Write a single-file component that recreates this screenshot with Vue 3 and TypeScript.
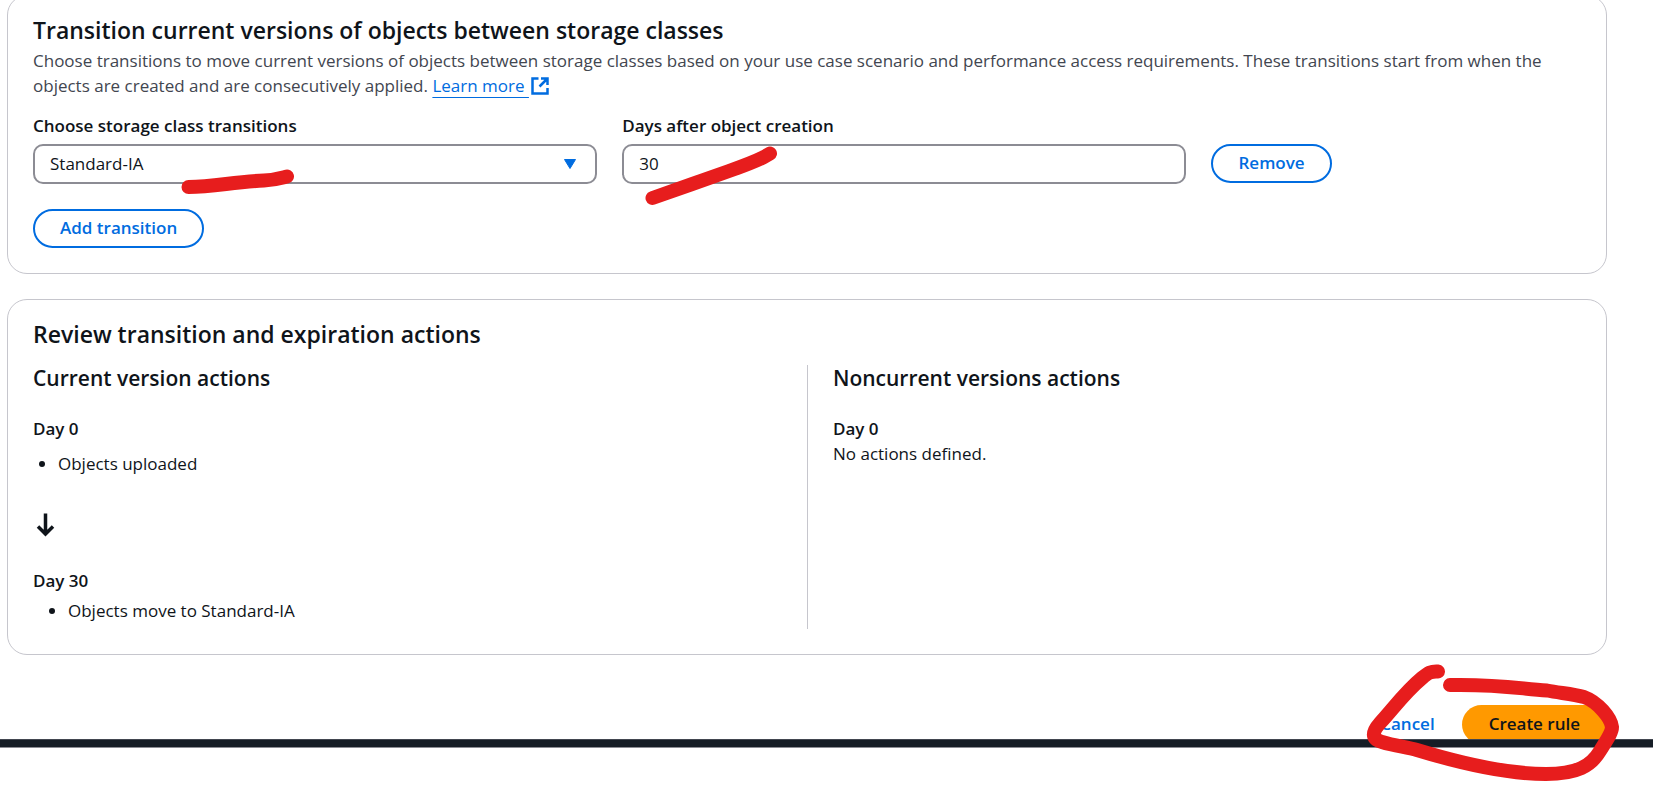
<script setup lang="ts">
import { ref } from 'vue'

interface DayActions {
  day: number
  items: string[]
}

const storageClass = ref('Standard-IA')
const days = ref('30')
const storageClasses: string[] = ['Standard-IA', 'Intelligent-Tiering', 'One Zone-IA']
const currentActions: DayActions[] = [
  { day: 0, items: ['Objects uploaded'] },
  { day: 30, items: ['Objects move to Standard-IA'] },
]
</script>

<template>
  <div class="page">
    <main class="content">
      <section class="card transitions">
        <h2>Transition current versions of objects between storage classes</h2>
        <p class="description">
          Choose transitions to move current versions of objects between storage classes based on your use case scenario
          and performance access requirements. These transitions start from when the objects are created and are
          consecutively applied.
          <a href="#" class="link">Learn more&nbsp;<svg class="external" viewBox="0 0 18 18" aria-hidden="true">
              <path d="M7.500 1.500H1.500V16.500H16.500V11M10 1.500H16.500V8M16.500 1.500L8.500 9.500" />
            </svg></a>
        </p>

        <div class="fields">
          <div class="field">
            <label for="storage-class">Choose storage class transitions</label>
            <div class="select">
              <select id="storage-class" v-model="storageClass">
                <option v-for="name in storageClasses" :key="name">{{ name }}</option>
              </select>
              <svg class="caret" viewBox="0 0 14 12" aria-hidden="true">
                <path d="M1.500 1.500H12.500L7 10.500Z" />
              </svg>
            </div>
          </div>
          <div class="field">
            <label for="days">Days after object creation</label>
            <input id="days" v-model="days" type="text" inputmode="numeric" />
          </div>
          <button type="button" class="button outline">Remove</button>
        </div>
        <button type="button" class="button outline">Add transition</button>
      </section>

      <section class="card review">
        <h2>Review transition and expiration actions</h2>
        <div class="columns">
          <div class="column">
            <h3>Current version actions</h3>
            <template v-for="(group, index) in currentActions" :key="group.day">
              <svg v-if="index > 0" class="arrow" viewBox="0 0 24 24" aria-hidden="true">
                <path d="M12.500 0.500V21M5 13.500L12.500 21L20 13.500" />
              </svg>
              <h4>Day {{ group.day }}</h4>
              <ul :class="{ moved: index > 0 }">
                <li v-for="item in group.items" :key="item">{{ item }}</li>
              </ul>
            </template>
          </div>
          <div class="column">
            <h3>Noncurrent versions actions</h3>
            <h4>Day 0</h4>
            <p>No actions defined.</p>
          </div>
        </div>
      </section>

      <div class="actions">
        <button type="button" class="button plain">Cancel</button>
        <button type="button" class="button primary">Create rule</button>
      </div>
    </main>
    <footer class="footer-bar"></footer>

    <svg class="marker" width="1653" height="785" viewBox="0 0 1653 785" aria-hidden="true">
      <path d="M188.500 187C214 187 232 182 264 180.500C275 180 281 178 287 176.500" />
      <path d="M652.500 198C681 188 701 181 729 171C746 165 758 160 764 157L770 153.500" />
      <path
        d="M1438 671.500C1431 671 1428 673 1422 678C1405 692 1393 709 1380 723C1372 732 1371 739 1382 742C1395 746 1407 747 1417 750C1463 764 1511 774 1546 774C1577 774 1591 766 1600 751C1606 741 1612 733 1612 727C1611 718 1598 702 1584 697C1573 694 1560 693 1547 690.500C1521 689 1501 684 1450 685"
      />
    </svg>
  </div>
</template>

<style>
body {
  margin: 0;
  background: #fff;
}
</style>

<style scoped>
.page {
  position: relative;
  min-height: 100vh;
  overflow: hidden;
  color: #0f141a;
  font-family: "Open Sans", "Noto Sans", sans-serif;
  font-size: 17px;
  line-height: 25px;
}

.content {
  padding: 0 46px 0 7px;
}

.card {
  box-sizing: border-box;
  border: 1px solid #c6c6cd;
  border-radius: 20px;
  padding: 19px 25px 25px;
}

.transitions {
  margin-top: -5px;
}

.review {
  margin-top: 25px;
}

h2,
h3,
h4,
p,
ul {
  margin: 0;
}

h2,
h3,
h4,
label,
.button {
  font-weight: 650;
}

h2 {
  font-size: 23px;
  line-height: 30px;
}

h3 {
  margin-bottom: 24px;
  font-size: 21px;
  line-height: 27px;
}

h4 {
  font-size: 17px;
}

.description {
  margin-top: 3px;
  color: #424650;
}

.link {
  color: #006ce0;
  text-decoration: underline;
  text-decoration-thickness: 1px;
  text-underline-offset: 5px;
}

.external {
  width: 18px;
  height: 18px;
  margin-left: 2px;
  vertical-align: -3px;
  fill: none;
  stroke: #006ce0;
  stroke-width: 2.5;
}

.fields {
  display: grid;
  grid-template-columns: 565fr 565fr 370fr;
  gap: 25px;
  align-items: end;
  justify-items: start;
  margin: 15px 0 25px;
}

.field {
  width: 100%;
}

label {
  display: block;
  margin-bottom: 6px;
}

.select {
  position: relative;
}

select,
input {
  display: block;
  box-sizing: border-box;
  width: 100%;
  height: 40px;
  margin: 0;
  border: 2px solid #8c8c94;
  border-radius: 10px;
  padding: 0 15px 2px;
  background: #fff;
  color: inherit;
  font: inherit;
  appearance: none;
}

.caret {
  position: absolute;
  top: 14px;
  right: 20px;
  width: 14px;
  height: 12px;
  fill: #006ce0;
  stroke: #006ce0;
  stroke-linejoin: round;
  pointer-events: none;
}

.button {
  box-sizing: border-box;
  height: 39px;
  border: 2px solid transparent;
  border-radius: 20px;
  padding: 0 25px 2px;
  background: none;
  font-family: inherit;
  font-size: 17px;
  line-height: 25px;
}

.outline {
  border-color: #006ce0;
  color: #006ce0;
}

.fields .button {
  margin-bottom: 1px;
}

.plain {
  color: #006ce0;
}

.primary {
  background: #ff9900;
  color: #0f141a;
}

.columns {
  display: grid;
  grid-template-columns: 1fr 1fr;
  margin-top: 16px;
}

.column + .column {
  border-left: 1px solid #c6c6cd;
  padding-left: 25px;
}

ul {
  padding: 10px 0 0 25px;
}

ul.moved {
  padding: 5px 0 6px 35px;
}

.arrow {
  display: block;
  width: 24px;
  height: 24px;
  margin: 37px 0 31px;
  fill: none;
  stroke: #0f141a;
  stroke-width: 3.5;
}

.actions {
  display: flex;
  justify-content: flex-end;
  margin-top: 50px;
}

.footer-bar {
  position: relative;
  box-sizing: border-box;
  height: 9px;
  margin-top: -5px;
  border-top: 1px solid #424650;
  border-bottom: 1px solid #8c8c94;
  background: #161d26;
}

.marker {
  position: absolute;
  top: 0;
  left: 0;
  fill: none;
  stroke: #e71d1d;
  stroke-width: 14;
  stroke-linecap: round;
  stroke-linejoin: round;
  pointer-events: none;
}
</style>
